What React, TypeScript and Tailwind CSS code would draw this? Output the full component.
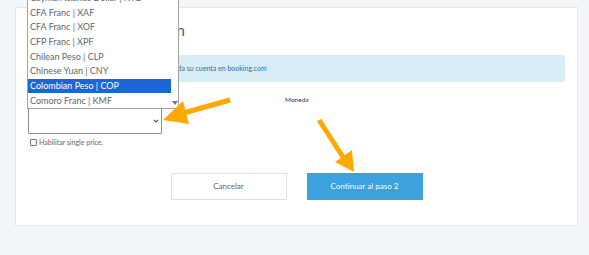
import React from "react";

const currencies = [
  "Cayman Islands Dollar | KYD",
  "CFA Franc | XAF",
  "CFA Franc | XOF",
  "CFP Franc | XPF",
  "Chilean Peso | CLP",
  "Chinese Yuan | CNY",
  "Colombian Peso | COP",
  "Comoro Franc | KMF",
];

const selected = "Colombian Peso | COP";

const CurrencyList = () => {
  return (
    <div className="absolute left-[27px] top-[-10.6px] w-[152px] flex bg-white border border-[#a3a3a3]">
      <div className="w-[143px]">
        {currencies.map((c) => (
          <div
            key={c}
            className={`h-[14.7px] flex items-center pl-[2px] text-[9px] whitespace-nowrap ${
              c === selected ? "bg-[#1b66d6] text-white" : "text-[#666]"
            }`}
          >
            {c}
          </div>
        ))}
      </div>
      {/* scrollbar */}
      <div className="w-[7px] flex flex-col justify-end items-center pb-[3px]">
        <div className="w-0 h-0 border-l-[3px] border-r-[3px] border-t-[4px] border-l-transparent border-r-transparent border-t-[#777]" />
      </div>
    </div>
  );
};

const Arrows = () => (
  <svg className="absolute inset-0 pointer-events-none" width="589" height="255">
    {/* left arrow, pointing at the select */}
    <line x1="230" y1="100" x2="180" y2="114" stroke="#ffa800" strokeWidth="5" />
    <polygon points="163,120 183,101 189,124" fill="#ffa800" />
    {/* right arrow, pointing at the button */}
    <line x1="319" y1="120" x2="343" y2="157" stroke="#ffa800" strokeWidth="5" />
    <polygon points="354,172 335,162 352,150" fill="#ffa800" />
  </svg>
);

export default function App() {
  return (
    <div className="relative w-[589px] h-[255px] overflow-hidden bg-[#f3f6f9] font-['Lato','Noto_Sans',sans-serif]">
      <div className="relative ml-[15px] top-[7px] w-[563px] h-[219px] bg-white border border-[#e3e8ee] px-[12px]">
        <h2 className="pt-[12px] w-[157px] text-right whitespace-nowrap text-[15px] leading-[20px] text-[#555]">
          Configurar la conexión
        </h2>

        <div className="mt-[15px] h-[27px] rounded-[3px] bg-[#d9edf7] flex items-center pl-[4px] text-[7px] text-[#31708f]">
          Ingrese el ID de la propiedad como está registrada su cuenta en booking.com
        </div>

        <div className="flex mt-[13px]">
          <div className="w-[134px] pt-[13px]">
            <div className="h-[26px] border border-[#8c8c8c] rounded-[1px] flex items-center justify-end pr-[2px]">
              <svg width="6" height="4" viewBox="0 0 6 4">
                <path d="M0.8 0.8 L3 3 L5.2 0.8" stroke="#555" strokeWidth="1.1" fill="none" />
              </svg>
            </div>
            <label className="mt-[3px] ml-[2px] flex items-center gap-[2px] text-[7px] text-[#666] whitespace-nowrap">
              <span className="w-[7px] h-[7px] border border-[#777] rounded-[1px] bg-white" />
              Habilitar single price.
            </label>
          </div>
          <div className="ml-[123px] text-[6.5px] text-[#333] h-[10px] leading-[10px]">Moneda</div>
        </div>

        <div className="flex justify-center gap-[20px] mt-[25px]">
          <button className="w-[116px] h-[27px] bg-white border border-[#dcdfe3] text-[8px] text-[#666]">
            Cancelar
          </button>
          <button className="w-[116px] h-[27px] bg-[#3ca1dc] text-[8px] text-white">
            Continuar al paso 2
          </button>
        </div>
      </div>
      <CurrencyList />
      <Arrows />
    </div>
  );
}
